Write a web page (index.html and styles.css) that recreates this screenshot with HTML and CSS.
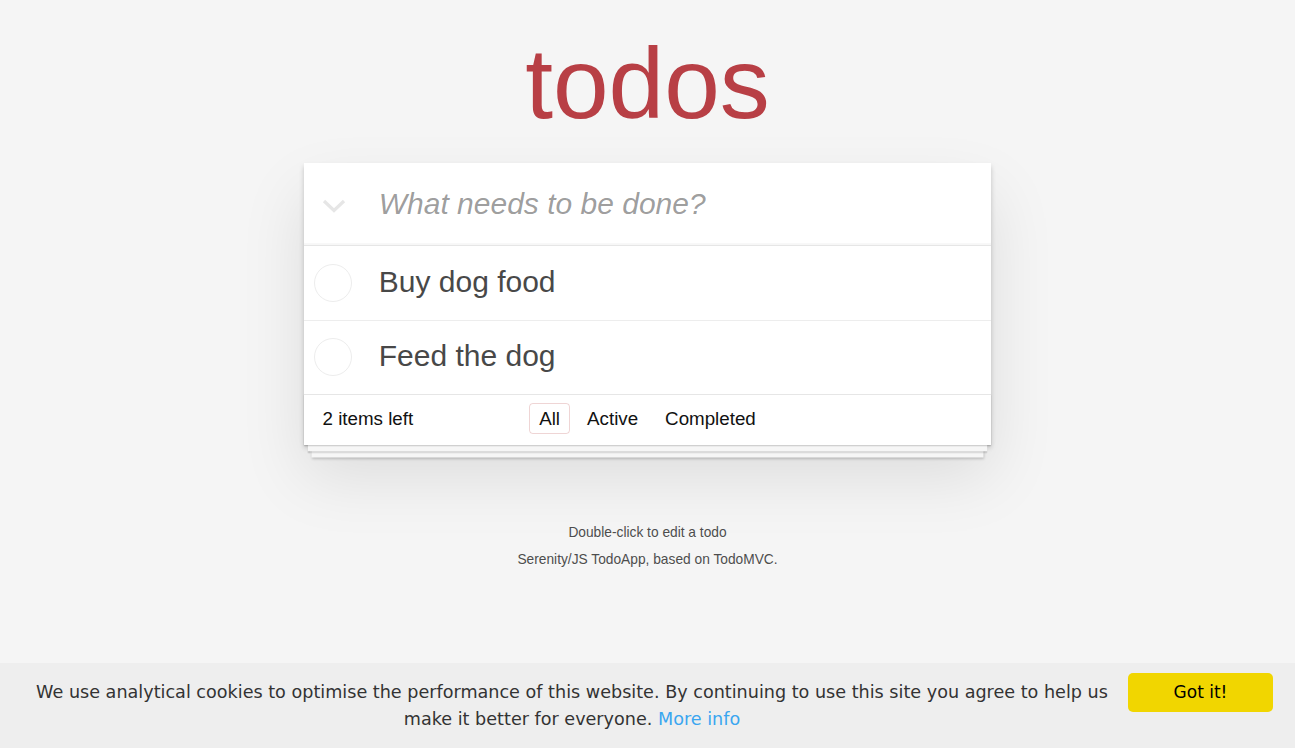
FILE: index.html
```html
<!DOCTYPE html>
<html lang="en">
<head>
<meta charset="utf-8">
<title>Serenity/JS TodoApp</title>
<link rel="stylesheet" href="styles.css">
</head>
<body>
<div class="page">
  <h1 class="title">todos</h1>
  <section class="todoapp">
    <header class="header">
      <label class="toggle-all" aria-label="Mark all as complete">
        <svg width="24" height="16" viewBox="0 0 24 16"><polyline points="2,3 12,12.5 22,3" fill="none" stroke="#e6e6e6" stroke-width="3.2" stroke-linecap="butt" stroke-linejoin="miter"/></svg>
      </label>
      <input class="new-todo" placeholder="What needs to be done?">
    </header>
    <ul class="todo-list">
      <li class="todo"><span class="toggle-box"><span class="toggle"></span></span><label class="todo-label">Buy dog food</label></li>
      <li class="todo"><span class="toggle-box"><span class="toggle"></span></span><label class="todo-label">Feed the dog</label></li>
    </ul>
    <footer class="footer">
      <span class="todo-count"><strong>2</strong> items left</span>
      <ul class="filters">
        <li><a class="selected" href="#/">All</a></li>
        <li><a href="#/active">Active</a></li>
        <li><a href="#/completed">Completed</a></li>
      </ul>
      <span class="spacer"></span>
    </footer>
  </section>
  <footer class="info">
    <p>Double-click to edit a todo</p>
    <p>Serenity/JS TodoApp, based on <a href="#">TodoMVC</a>.</p>
  </footer>
</div>
<div class="cookie-banner" role="dialog">
  <span class="cookie-message">We use analytical cookies to optimise the performance of this website. By continuing to use this site you agree to help us make it better for everyone. <a class="cookie-link" href="#">More info</a></span>
  <a class="cookie-btn" href="#">Got it!</a>
</div>
</body>
</html>
```
FILE: styles.css
```css
html, body {
  margin: 0;
  padding: 0;
}

body {
  background: #f5f5f5;
  color: #111111;
  font: 17.5px "Liberation Sans", Arial, Helvetica, sans-serif;
  line-height: 1.4em;
}

.page {
  width: 687.5px;
  margin: 0 auto;
  padding-top: 33px;
}

.title {
  margin: 0 0 30px;
  height: 100px;
  font-size: 100px;
  line-height: 100px;
  font-weight: 400;
  text-align: center;
  color: #b83f45;
}

.todoapp {
  background: #ffffff;
  box-shadow: 0 2.5px 5px 0 rgba(0, 0, 0, 0.2), 0 31px 62px 0 rgba(0, 0, 0, 0.1);
}

.header {
  display: flex;
  align-items: center;
  height: 82px;
  border-bottom: 1px solid #e6e6e6;
  box-shadow: inset 0 -2px 1px rgba(0, 0, 0, 0.03);
}

.toggle-all {
  width: 75px;
  display: flex;
  padding-left: 18px;
  box-sizing: border-box;
  padding-top: 3px;
}

.toggle-all svg {
  display: block;
}

.new-todo {
  flex: 1;
  min-width: 0;
  border: none;
  outline: none;
  background: transparent;
  font: 30px "Liberation Sans", Arial, sans-serif;
  color: #484848;
  padding: 0;
  height: 42px;
  line-height: 42px;
}

.new-todo::placeholder {
  font-style: italic;
  color: rgba(0, 0, 0, 0.4);
}

.todo-list {
  list-style: none;
  margin: 0;
  padding: 0;
}

.todo {
  display: flex;
  align-items: center;
  border-bottom: 1px solid #ededed;
}

.todo:last-child {
  border-bottom: none;
}

.toggle-box {
  width: 75px;
  display: flex;
  padding-left: 10px;
  box-sizing: border-box;
}

.toggle {
  width: 36px;
  height: 36px;
  border: 1.2px solid #ededed;
  border-radius: 50%;
}

.todo-label {
  flex: 1;
  font-size: 30px;
  line-height: 36px;
  padding: 17.75px 18.75px 19.75px 0;
  color: #484848;
}

.footer {
  display: grid;
  grid-template-columns: 1fr auto 1fr;
  align-items: center;
  height: 47px;
  padding: 0 18.75px 3px;
  border-top: 1px solid #e6e6e6;
  font-size: 18.75px;
  color: #111111;
  box-shadow: 0 1.25px 1.25px rgba(0, 0, 0, 0.2),
    0 10px 0 -3.75px #f6f6f6,
    0 11.25px 1.25px -3.75px rgba(0, 0, 0, 0.2),
    0 20px 0 -7.5px #f6f6f6,
    0 21.25px 2.5px -7.5px rgba(0, 0, 0, 0.2);
}

.todo-count {
  padding-top: 1px;
}

.todo-count strong {
  font-weight: 400;
}

.filters {
  display: flex;
  list-style: none;
  margin: 0;
  padding: 0;
}

.filters a {
  display: block;
  margin: 0 3.75px;
  padding: 3.75px 8.75px;
  line-height: 21px;
  border: 1.25px solid transparent;
  border-radius: 3.75px;
  color: inherit;
  text-decoration: none;
}

.filters a.selected {
  border-color: rgba(175, 47, 47, 0.2);
}

.info {
  margin-top: 80px;
  color: #4d4d4d;
  font-size: 13.75px;
  text-align: center;
  text-shadow: 0 1px 0 rgba(255, 255, 255, 0.5);
}

.info p {
  margin: 0 0 12px;
  line-height: 15px;
}

.info a {
  color: inherit;
  text-decoration: none;
}

.cookie-banner {
  position: fixed;
  left: 0;
  right: 0;
  bottom: 0;
  display: flex;
  align-items: flex-start;
  padding: 10px 22px 15.5px 32px;
  background: #eeeeee;
  color: #333333;
  font: 17.6px "DejaVu Sans", Verdana, sans-serif;
  line-height: 27px;
}

.cookie-message {
  flex: 1;
  padding-top: 5.5px;
  text-align: center;
}

.cookie-link {
  color: #3aa6f0;
  text-decoration: none;
}

.cookie-btn {
  flex: none;
  margin-left: 16px;
  width: 145px;
  height: 39px;
  line-height: 39px;
  border-radius: 5px;
  background: #f1d600;
  color: #000000;
  text-align: center;
  text-decoration: none;
  font-size: 17px;
}
```
